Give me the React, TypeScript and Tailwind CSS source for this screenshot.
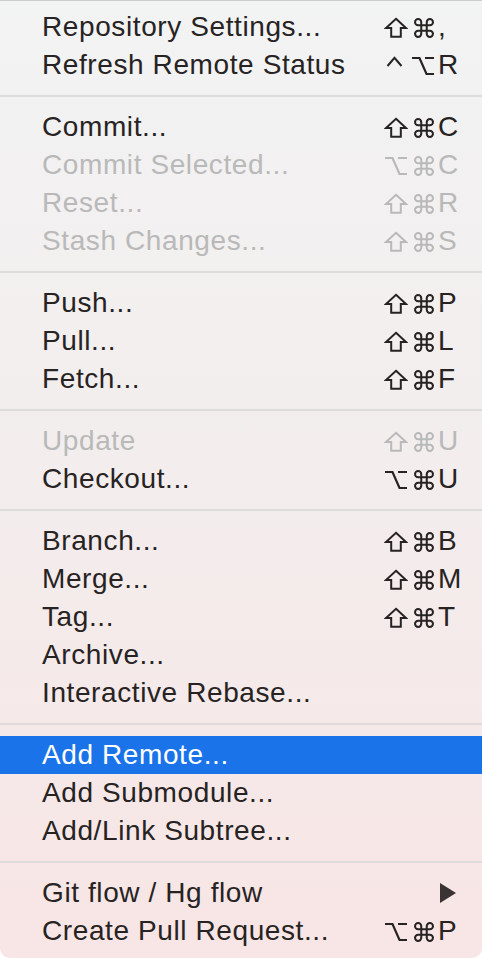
type Mod = 'shift' | 'cmd' | 'opt' | 'ctrl'

type Item =
  | { sep: true }
  | {
      sep?: false
      label: string
      mods?: Mod[]
      keyChar?: string
      disabled?: boolean
      active?: boolean
      submenu?: boolean
    }

const items: Item[] = [
  { label: 'Repository Settings...', mods: ['shift', 'cmd'], keyChar: ',' },
  { label: 'Refresh Remote Status', mods: ['ctrl', 'opt'], keyChar: 'R' },
  { sep: true },
  { label: 'Commit...', mods: ['shift', 'cmd'], keyChar: 'C' },
  { label: 'Commit Selected...', mods: ['opt', 'cmd'], keyChar: 'C', disabled: true },
  { label: 'Reset...', mods: ['shift', 'cmd'], keyChar: 'R', disabled: true },
  { label: 'Stash Changes...', mods: ['shift', 'cmd'], keyChar: 'S', disabled: true },
  { sep: true },
  { label: 'Push...', mods: ['shift', 'cmd'], keyChar: 'P' },
  { label: 'Pull...', mods: ['shift', 'cmd'], keyChar: 'L' },
  { label: 'Fetch...', mods: ['shift', 'cmd'], keyChar: 'F' },
  { sep: true },
  { label: 'Update', mods: ['shift', 'cmd'], keyChar: 'U', disabled: true },
  { label: 'Checkout...', mods: ['opt', 'cmd'], keyChar: 'U' },
  { sep: true },
  { label: 'Branch...', mods: ['shift', 'cmd'], keyChar: 'B' },
  { label: 'Merge...', mods: ['shift', 'cmd'], keyChar: 'M' },
  { label: 'Tag...', mods: ['shift', 'cmd'], keyChar: 'T' },
  { label: 'Archive...' },
  { label: 'Interactive Rebase...' },
  { sep: true },
  { label: 'Add Remote...', active: true },
  { label: 'Add Submodule...' },
  { label: 'Add/Link Subtree...' },
  { sep: true },
  { label: 'Git flow / Hg flow', submenu: true },
  { label: 'Create Pull Request...', mods: ['opt', 'cmd'], keyChar: 'P' },
]

// modifier key glyphs, drawn to match the mac menu symbols
function ModGlyph({ mod }: { mod: Mod }) {
  const common = {
    fill: 'none',
    stroke: 'currentColor',
    strokeWidth: 2,
    strokeLinejoin: 'miter' as const,
  }
  if (mod === 'shift')
    return (
      <svg width="24" height="21" viewBox="0 0 24 21">
        <path d="M12 1.8 L22 11 H16.8 V19.8 H7.2 V11 H2 Z" {...common} />
      </svg>
    )
  if (mod === 'opt')
    return (
      <svg width="24" height="21" viewBox="0 0 24 21">
        <path d="M1 3 H8.5 L15.5 19 H23 M14 3 H23" {...common} strokeWidth={2.2} />
      </svg>
    )
  if (mod === 'ctrl')
    return (
      <svg width="24" height="21" viewBox="0 0 24 21">
        <path d="M3.5 11 L10.5 2.8 L17.5 11" {...common} />
      </svg>
    )
  return (
    <svg width="22" height="22" viewBox="0 0 24 24">
      <path
        d="M9 9 V5.6 A3.4 3.4 0 1 0 5.6 9 H18.4 A3.4 3.4 0 1 0 15 5.6 V18.4 A3.4 3.4 0 1 0 18.4 15 H5.6 A3.4 3.4 0 1 0 9 18.4 Z"
        fill="none"
        stroke="currentColor"
        strokeWidth={2.2}
      />
    </svg>
  )
}

function MenuRow({ item }: { item: Exclude<Item, { sep: true }> }) {
  const color = item.active
    ? 'text-white bg-[#1b73e9]'
    : item.disabled
      ? 'text-[#b9b9b9]'
      : 'text-[#272323]'

  return (
    <div className={`flex h-[38px] items-center pl-[42px] pr-[20px] ${color}`}>
      <span className="flex-1 whitespace-nowrap text-[28px] leading-[38px] tracking-[0.6px] font-['Liberation_Sans',Arial,sans-serif]">
        {item.label}
      </span>
      {item.mods && (
        <span className="flex items-center">
          {item.mods.map((m, i) => (
            <span key={i} className="flex w-[27px] justify-end pt-[1px]">
              <ModGlyph mod={m} />
            </span>
          ))}
          <span className="w-[27px] pl-[3px] text-left text-[28px] leading-[38px] font-['Liberation_Sans',Arial,sans-serif]">
            {item.keyChar}
          </span>
        </span>
      )}
      {item.submenu && (
        <svg width="16" height="20" viewBox="0 0 16 20" className="mr-[6px]">
          <path d="M0 0 L16 10 L0 20 Z" fill="#3a3333" />
        </svg>
      )}
    </div>
  )
}

export default function App() {
  return (
    <div className="min-h-screen w-full bg-white">
      <div className="w-[482px] h-[958px] overflow-hidden rounded-b-[10px] border-t border-[#cdcdcd] bg-linear-to-b from-[#f2f3f3] via-[#f3eded] to-[#f8e5e5] pt-[7px] pb-[8px]">
        {items.map((item, i) =>
          item.sep ? (
            <div key={i} className="flex h-[24px] items-center">
              <div className="h-[2px] w-full bg-[#dedbdb]" />
            </div>
          ) : (
            <MenuRow key={i} item={item} />
          ),
        )}
      </div>
    </div>
  )
}
